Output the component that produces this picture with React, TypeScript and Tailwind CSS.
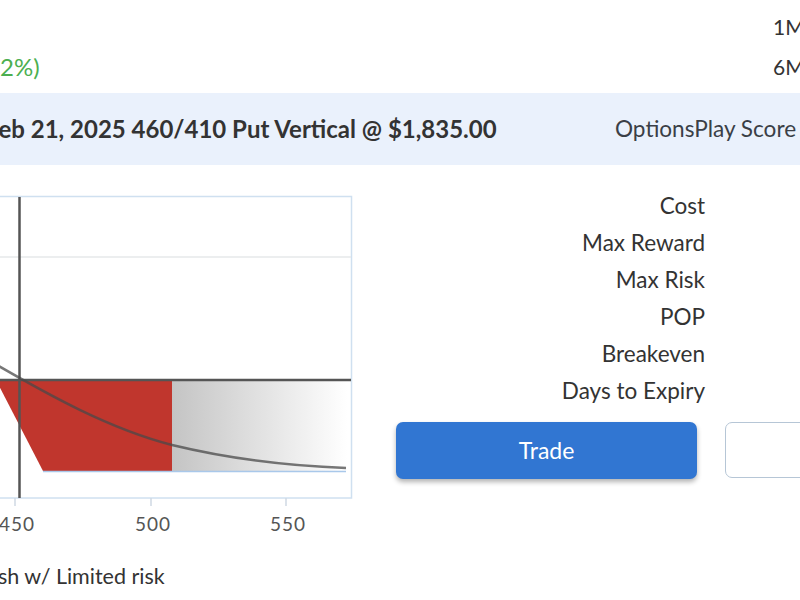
import React from "react";

const stats = ["Cost", "Max Reward", "Max Risk", "POP", "Breakeven", "Days to Expiry"];

const ticks = [
	{ x: 15, label: "450" },
	{ x: 151, label: "500" },
	{ x: 286, label: "550" },
];

// offset: svg top sits at page y=164
const Y = (y: number) => y - 164;

const PayoffChart = () => (
	<svg width="372" height="380" viewBox="0 0 372 380" className="block">
		<defs>
			<linearGradient id="lossFade" x1="0" y1="0" x2="1" y2="0">
				<stop offset="0" stopColor="#c4c4c4" />
				<stop offset="1" stopColor="#ffffff" />
			</linearGradient>
		</defs>
		{/* frame */}
		<rect x="-20" y={Y(195.5)} width="371.5" height={497 - 195.5} fill="#fff" stroke="#cfe0f0" strokeWidth="1.5" />
		<line x1="0" x2="351" y1={Y(256)} y2={Y(256)} stroke="#e6e8ea" strokeWidth="1.5" />
		{/* loss region */}
		<polygon points={`-4,${Y(379)} 172,${Y(379)} 172,${Y(470)} 43,${Y(470)}`} fill="#c0362d" />
		<rect x="172" y={Y(380)} width="175" height="90" fill="url(#lossFade)" />
		<line x1="43" x2="346" y1={Y(470.5)} y2={Y(470.5)} stroke="#a9c8ea" strokeWidth="1.5" />
		{/* axes */}
		<line x1="19.5" x2="19.5" y1={Y(196)} y2={Y(497)} stroke="#555" strokeWidth="2.5" />
		<line x1="0" x2="351" y1={Y(379)} y2={Y(379)} stroke="#555" strokeWidth="2.5" />
		{/* probability curve */}
		<path
			d={`M -10,${Y(360)} C 50,${Y(395)} 110,${Y(428)} 172,${Y(444)} C 230,${Y(458)} 290,${Y(465)} 346,${Y(467)}`}
			fill="none"
			stroke="#4a4a4a"
			strokeOpacity="0.75"
			strokeWidth="2.5"
		/>
		{ticks.map((t) => (
			<g key={t.label}>
				<line x1={t.x} x2={t.x} y1={Y(497)} y2={Y(505)} stroke="#cfd8e3" strokeWidth="1.5" />
				<text
					x={t.x + 2}
					y={Y(530)}
					textAnchor="middle"
					fontSize="19"
					fill="#555"
					letterSpacing="1"
					fontFamily="Lato, 'Open Sans', sans-serif"
				>
					{t.label}
				</text>
			</g>
		))}
	</svg>
);

export default function App() {
	return (
		<div className="relative w-[800px] h-[600px] overflow-hidden bg-white text-[#333] font-['Lato','Open_Sans',sans-serif]">
			<div className="h-[93px] flex justify-between">
				<div className="pt-[52px] text-[24px] leading-[30px] text-[#4caf50]">2%)</div>
				<div className="w-[27px] pt-[12px] flex flex-col gap-[10px] text-[21px] leading-[30px] whitespace-nowrap">
					<span>1M</span>
					<span>6M</span>
				</div>
			</div>

			<div className="h-[72px] bg-[#eaf1fc] grid grid-cols-[615px_1fr] items-center">
				<div className="-ml-[14px] text-[24px] font-bold whitespace-nowrap">
					Feb 21, 2025 460/410 Put Vertical @ $1,835.00
				</div>
				<div className="text-[22.6px] text-[#3a3f47] whitespace-nowrap">OptionsPlay Score</div>
			</div>

			<div className="flex">
				<div className="w-[372px] shrink-0 flex flex-col">
					<PayoffChart />
					<div className="-ml-[2px] mt-[17px] text-[21.5px] leading-[28px] whitespace-nowrap">
						sh w/ Limited risk
					</div>
				</div>

				<div className="ml-[24px] flex-1 pt-[22px]">
					<div className="grid grid-cols-[309px_1fr] gap-x-[20px]">
						{stats.map((s) => (
							<React.Fragment key={s}>
								<div className="h-[37px] flex items-center justify-end text-[22.5px] whitespace-nowrap">{s}</div>
								<div className="h-[37px]" />
							</React.Fragment>
						))}
					</div>
					<div className="mt-[13px] flex gap-[28px]">
						<button className="w-[301px] h-[57px] shrink-0 rounded-[7px] bg-[#3176d2] text-white text-[23px] shadow-[0_3px_5px_rgba(0,0,0,0.3)]">
							Trade
						</button>
						<button className="w-[120px] h-[56px] shrink-0 rounded-[7px] border border-[#b6c6d6] bg-white" />
					</div>
				</div>
			</div>
		</div>
	);
}
